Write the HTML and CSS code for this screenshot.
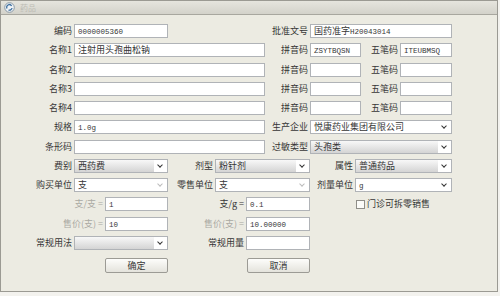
FILE: index.html
```html
<!DOCTYPE html>
<html lang="zh-CN">
<head>
    <meta charset="UTF-8">
    <title>药品</title>
    <link rel="stylesheet" href="styles.css">
</head>
<body>
    <div class="window">
        <div class="titlebar">
            <span class="app-icon">
                <svg width="11" height="11" viewBox="0 0 11 11">
                    <circle cx="5.5" cy="5.5" r="4.8" fill="#eef2f6" stroke="#8c9aa6" stroke-width="1"/>
                    <path d="M3 6.5 A2.6 2.6 0 0 1 7.6 4" fill="none" stroke="#3d6f9e" stroke-width="1.3"/>
                    <path d="M8 6 A2.6 2.6 0 0 1 4.5 8" fill="none" stroke="#3d6f9e" stroke-width="1.3"/>
                </svg>
            </span>
            <span class="title">药品</span>
        </div>
        <div class="content">
            <div class="form">
                <div class="row">
                    <label class="lbl w74">编码</label>
                    <div class="field w94"><span class="en">0000005360</span></div>
                    <label class="lbl w142">批准文号</label>
                    <div class="field w142">国药准字<span class="en">H20043014</span></div>
                </div>
                <div class="row">
                    <label class="lbl w74">名称1</label>
                    <div class="field w191">注射用头孢曲松钠</div>
                    <label class="lbl w45">拼音码</label>
                    <div class="field w51"><span class="en">ZSYTBQSN</span></div>
                    <label class="lbl w39">五笔码</label>
                    <div class="field w52"><span class="en">ITEUBMSQ</span></div>
                </div>
                <div class="row">
                    <label class="lbl w74">名称2</label>
                    <div class="field w191"></div>
                    <label class="lbl w45">拼音码</label>
                    <div class="field w51"></div>
                    <label class="lbl w39">五笔码</label>
                    <div class="field w52"></div>
                </div>
                <div class="row">
                    <label class="lbl w74">名称3</label>
                    <div class="field w191"></div>
                    <label class="lbl w45">拼音码</label>
                    <div class="field w51"></div>
                    <label class="lbl w39">五笔码</label>
                    <div class="field w52"></div>
                </div>
                <div class="row">
                    <label class="lbl w74">名称4</label>
                    <div class="field w191"></div>
                    <label class="lbl w45">拼音码</label>
                    <div class="field w51"></div>
                    <label class="lbl w39">五笔码</label>
                    <div class="field w52"></div>
                </div>
                <div class="row">
                    <label class="lbl w74">规格</label>
                    <div class="field w191"><span class="en">1.0g</span></div>
                    <label class="lbl w45">生产企业</label>
                    <div class="field select w142">悦康药业集团有限公司</div>
                </div>
                <div class="row">
                    <label class="lbl w74">条形码</label>
                    <div class="field w191"></div>
                    <label class="lbl w45">过敏类型</label>
                    <div class="field select grad w142">头孢类</div>
                </div>
                <div class="row">
                    <label class="lbl w74">费别</label>
                    <div class="field select grad w94">西药费</div>
                    <label class="lbl w47">剂型</label>
                    <div class="field select grad w95">粉针剂</div>
                    <label class="lbl w45">属性</label>
                    <div class="field select grad w97">普通药品</div>
                </div>
                <div class="row">
                    <label class="lbl w74">购买单位</label>
                    <div class="field select off w94">支</div>
                    <label class="lbl w47">零售单位</label>
                    <div class="field select off w95">支</div>
                    <label class="lbl w45">剂量单位</label>
                    <div class="field select w97"><span class="en">g</span></div>
                </div>
                <div class="row">
                    <label class="lbl dim w105">支/支 =</label>
                    <div class="field w63"><span class="en">1</span></div>
                    <label class="lbl w78">支/g =</label>
                    <div class="field w64"><span class="en">0.1</span></div>
                    <span class="check"></span>
                    <span class="check-text">门诊可拆零销售</span>
                </div>
                <div class="row">
                    <label class="lbl dim w105">售价(支) =</label>
                    <div class="field w63"><span class="en">10</span></div>
                    <label class="lbl dim w78">售价(支) =</label>
                    <div class="field w64"><span class="en">10.00000</span></div>
                </div>
                <div class="row">
                    <label class="lbl w74">常规用法</label>
                    <div class="field select grad w94"></div>
                    <label class="lbl w78">常规用量</label>
                    <div class="field w64"></div>
                </div>
            </div>
            <div class="buttons">
                <button class="btn">确定</button>
                <button class="btn">取消</button>
            </div>
        </div>
    </div>
</body>
</html>
```

FILE: styles.css
```css
body {
    margin: 0;
    background-color: #f3f2ee;
    font-family: "Noto Sans CJK SC", "Liberation Sans", sans-serif;
    font-size: 9px;
    color: #363636;
}
.window {
    width: 496px;
    height: 290px;
    border: 1px solid #9b9a93;
    background-color: #ecebe2;
}
.titlebar {
    height: 13px;
    border-bottom: 1px solid #a8a79f;
    background: linear-gradient(#e6e5de, #d3d2ca);
    display: flex;
    align-items: center;
    padding-left: 3px;
}
.app-icon {
    display: flex;
    width: 11px;
    height: 11px;
}
.title {
    margin-left: 5px;
    color: #bdbcb4;
    font-size: 8px;
}
.content {
    padding-top: 9px;
}
.form {
    display: grid;
    grid-auto-rows: 14px;
    row-gap: 5.27px;
}
.row {
    display: flex;
    align-items: stretch;
}
.lbl {
    box-sizing: border-box;
    padding-right: 2px;
    text-align: right;
    line-height: 14px;
    white-space: nowrap;
}
.lbl.dim {
    color: #aaa9a3;
}
.field {
    box-sizing: border-box;
    border: 1px solid #b0b3b7;
    background-color: #fff;
    padding-left: 3px;
    line-height: 12px;
    white-space: nowrap;
    overflow: hidden;
}
.en {
    font-family: "Liberation Mono", monospace;
    font-size: 7.5px;
}
.select {
    position: relative;
}
.select::after {
    content: "";
    position: absolute;
    right: 5px;
    top: 3px;
    width: 3px;
    height: 3px;
    border-right: 1.5px solid #333;
    border-bottom: 1.5px solid #333;
    transform: rotate(45deg);
}
.select.grad {
    background: linear-gradient(#fff, #fff) right / 13px 100% no-repeat, linear-gradient(#f8f8f8, #d4d4d4);
}
.select.off::after {
    border-color: #bcbcbc;
}
.w39 { width: 39px; }
.w45 { width: 45px; }
.w47 { width: 47px; }
.w51 { width: 51px; }
.w52 { width: 52px; }
.w63 { width: 63px; }
.w64 { width: 64px; }
.w74 { width: 73px; }
.w78 { width: 78px; }
.w94 { width: 94px; }
.w95 { width: 95px; }
.w97 { width: 97px; }
.w105 { width: 104px; }
.w142 { width: 142px; }
.w191 { width: 191px; }
.check {
    box-sizing: border-box;
    width: 9px;
    height: 9px;
    margin: 3px 2px 0 46px;
    border: 1px solid #8f8e88;
    background-color: #fbfbf8;
}
.check-text {
    line-height: 14px;
}
.buttons {
    display: flex;
    gap: 79px;
    margin-top: 8px;
    padding-left: 104px;
}
.btn {
    width: 63px;
    height: 15px;
    padding: 0;
    border: 1px solid #9c9b95;
    border-radius: 2px;
    background: linear-gradient(#fdfdfb, #e4e3dc);
    font-family: "Noto Sans CJK SC", sans-serif;
    font-size: 9px;
    color: #363636;
    line-height: 13px;
}
```
